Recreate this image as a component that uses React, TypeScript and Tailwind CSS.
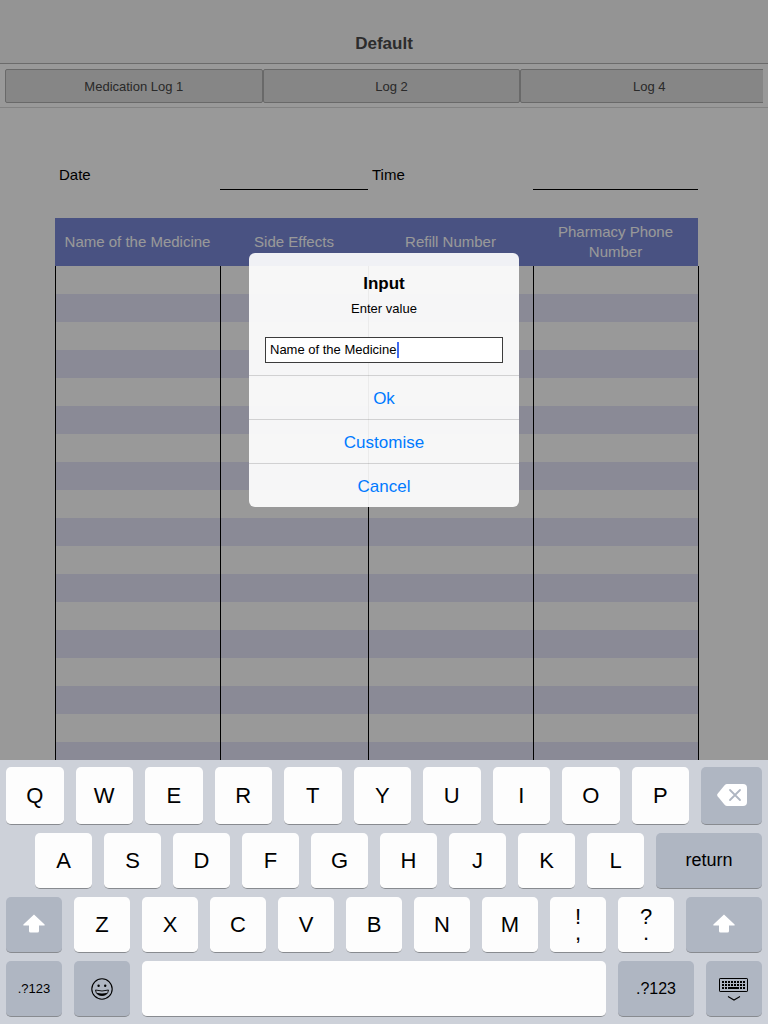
import type { ReactNode } from "react";

const tabs = ["Medication Log 1", "Log 2", "Log 4"];
const columns = [
  { name: "Name of the Medicine", width: "w-[165px]" },
  { name: "Side Effects", width: "w-[148px]" },
  { name: "Refill Number", width: "w-[165px]" },
  { name: "Pharmacy Phone Number", width: "w-[166px]" },
];
const rows = Array.from({ length: 18 }, (_, i) => i + 1);

function NavBar() {
  return (
    <header className="flex h-16 shrink-0 items-center justify-center border-b border-[#b2b2b2] bg-[#f7f7f7] pt-6">
      <h1 className="text-[17px] leading-5 font-bold text-[#4a4a4a]">Default</h1>
    </header>
  );
}

function TabStrip() {
  return (
    <nav className="h-11 shrink-0 border-b border-[#dadada] px-[5px] pt-[5px]">
      <div className="flex overflow-hidden">
        {tabs.map((tab) => (
          <button
            key={tab}
            type="button"
            className="h-[34px] w-[34%] shrink-0 rounded-[2px] border border-[#afafaf] bg-[#dfdfdf] pt-0.5 text-[13px] text-[#464646]"
          >
            {tab}
          </button>
        ))}
      </div>
    </nav>
  );
}

function Sheet() {
  return (
    <main className="pt-[52px] pr-[69px] pl-[55px] text-[15px] leading-5">
      <div className="mr-px grid grid-cols-[165fr_148fr_165fr_165fr]">
        <label htmlFor="date" className="flex h-[30px] items-center pl-1">Date</label>
        <input id="date" type="text" className="h-[30px] w-full min-w-0 border-b border-black px-1 outline-none" />
        <label htmlFor="time" className="flex h-[30px] items-center pl-1">Time</label>
        <input id="time" type="text" className="h-[30px] w-full min-w-0 border-b border-black px-1 outline-none" />
      </div>
      <table className="mt-7 w-full table-fixed border-separate border-spacing-0">
        <thead>
          <tr className="h-12">
            {columns.map((column) => (
              <th
                key={column.name}
                scope="col"
                className={`${column.width} bg-[#7a89d9] bg-clip-padding p-1 font-normal text-white last:border-r last:border-transparent`}
              >
                {column.name}
              </th>
            ))}
          </tr>
        </thead>
        <tbody>
          {rows.map((row) => (
            <tr key={row} className="h-7 even:bg-[#e6e6fb]">
              {columns.map((column) => (
                <td key={column.name} className="border-l border-black p-0 last:border-r" />
              ))}
            </tr>
          ))}
        </tbody>
      </table>
    </main>
  );
}

function InputDialog() {
  return (
    <div className="absolute inset-0 flex items-center justify-center bg-black/40">
      <form
        role="dialog"
        aria-labelledby="dialog-title"
        className="w-[270px] overflow-hidden rounded-[6px] bg-white/92"
        onSubmit={(e) => e.preventDefault()}
      >
        <div className="px-4 pt-5 pb-3 text-center">
          <h2 id="dialog-title" className="text-[17px] leading-[22px] font-bold">Input</h2>
          <label htmlFor="value" className="mt-1 block text-[13px] leading-5">Enter value</label>
          <div className="relative mt-[18px]">
            <input
              id="value"
              type="text"
              defaultValue="Name of the Medicine"
              className="block h-[26px] w-full border border-[#3c3c3c] bg-white px-1 pb-0.5 text-[13px] outline-none"
            />
            <span className="absolute top-[5px] left-[132px] h-4 w-[2px] bg-[#426bf2]" />
          </div>
        </div>
        {["Ok", "Customise", "Cancel"].map((action) => (
          <button
            key={action}
            type="button"
            className="block h-11 w-full border-t border-black/15 pt-0.5 text-[17px] text-[#007aff]"
          >
            {action}
          </button>
        ))}
      </form>
    </div>
  );
}

type KeyProps = { children?: ReactNode; label?: string; size?: string; dark?: boolean };

function Key({ children, label, size = "min-w-0 flex-1 text-[22px]", dark = false }: KeyProps) {
  const tone = dark ? "bg-[#afb6c2]" : "bg-[#fdfdfd]";
  return (
    <button
      type="button"
      aria-label={label}
      className={`flex h-full flex-col items-center justify-center rounded-[5px] border-b border-[#888b90] ${tone} ${size}`}
    >
      {children}
    </button>
  );
}

function Letters({ text }: { text: string }) {
  return text.split("").map((letter) => <Key key={letter}>{letter}</Key>);
}

function ShiftIcon() {
  return (
    <svg width="24" height="22" viewBox="0 0 24 22" fill="#fff" aria-hidden="true">
      <path d="M12 0.5 L22.6 10.6 Q23.2 11.5 22.2 11.5 H17 V17 Q17 18.5 15.5 18.5 H8.5 Q7 18.5 7 17 V11.5 H1.8 Q0.8 11.5 1.4 10.6 Z" />
    </svg>
  );
}

function DeleteIcon() {
  return (
    <svg width="30" height="24" viewBox="0 0 30 24" aria-hidden="true">
      <path d="M10 0 H26 Q30 0 30 4 V18 Q30 22 26 22 H10 Q8.8 22 7.8 21 L0.6 12.2 Q-0.3 11 0.6 9.8 L7.8 1 Q8.8 0 10 0 Z" fill="#fff" />
      <path d="M13 6 L23 16 M23 6 L13 16" stroke="#afb6c2" strokeWidth="1.8" strokeLinecap="round" />
    </svg>
  );
}

function SmileIcon() {
  return (
    <svg width="22" height="22" viewBox="0 0 22 22" fill="none" stroke="#000" aria-hidden="true">
      <circle cx="11" cy="11" r="10.2" strokeWidth="1.1" />
      <circle cx="7.6" cy="7.8" r="1.2" fill="#000" stroke="none" />
      <circle cx="14.2" cy="7.8" r="1.2" fill="#000" stroke="none" />
      <path d="M4.5 12 Q11 14 17.5 12 Q16.8 17.5 11 17.5 Q5.2 17.5 4.5 12 Z" strokeWidth="0.9" />
      <path d="M5.5 14.8 Q11 16.2 16.5 14.8 Q15 17.5 11 17.5 Q7 17.5 5.5 14.8 Z" fill="#000" stroke="none" />
    </svg>
  );
}

function HideKeyboardIcon() {
  return (
    <svg width="30" height="25" viewBox="0 0 30 25" fill="none" stroke="#000" aria-hidden="true">
      <rect x="0.5" y="2.5" width="28" height="13" rx="0.6" />
      <path d="M3 6 H26 M3 9 H26" strokeWidth="2" strokeDasharray="2 1" />
      <path d="M3 12 H8 M21 12 H26" strokeWidth="2" strokeDasharray="2 1" />
      <path d="M9 12 H20" strokeWidth="2" />
      <path d="M9 20.5 L15 24 L21 20.5" strokeWidth="1.1" />
    </svg>
  );
}

function Keyboard() {
  return (
    <section aria-label="Keyboard" className="flex shrink-0 flex-col gap-2 bg-[#cdd1d9] px-[6px] py-[7px]">
      <div className="flex h-[58px] gap-3">
        <Letters text="QWERTYUIOP" />
        <Key label="Delete" dark size="w-[61px]"><DeleteIcon /></Key>
      </div>
      <div className="flex h-14 gap-3 pl-[29px]">
        <Letters text="ASDFGHJKL" />
        <Key dark size="w-[106px] text-[18px]">return</Key>
      </div>
      <div className="flex h-14 gap-3">
        <Key label="Left shift" dark><ShiftIcon /></Key>
        <Letters text="ZXCVBNM" />
        <Key><span className="leading-4 whitespace-pre-line">{"!\n,"}</span></Key>
        <Key><span className="leading-4 whitespace-pre-line">{"?\n."}</span></Key>
        <Key label="Right shift" dark size="w-[76px]"><ShiftIcon /></Key>
      </div>
      <div className="flex h-14 gap-3">
        <Key dark size="w-14 text-[13px]">.?123</Key>
        <Key label="Emoji" dark size="w-14"><SmileIcon /></Key>
        <Key label="Space" />
        <Key dark size="w-[76px] text-[16px]">.?123</Key>
        <Key label="Hide keyboard" dark size="w-14"><HideKeyboardIcon /></Key>
      </div>
    </section>
  );
}

export default function App() {
  return (
    <div className="flex h-screen flex-col overflow-hidden bg-white font-['Liberation_Sans',Arial,sans-serif] text-black">
      <div className="relative min-h-0 flex-1 overflow-hidden">
        <NavBar />
        <TabStrip />
        <Sheet />
        <InputDialog />
      </div>
      <Keyboard />
    </div>
  );
}
